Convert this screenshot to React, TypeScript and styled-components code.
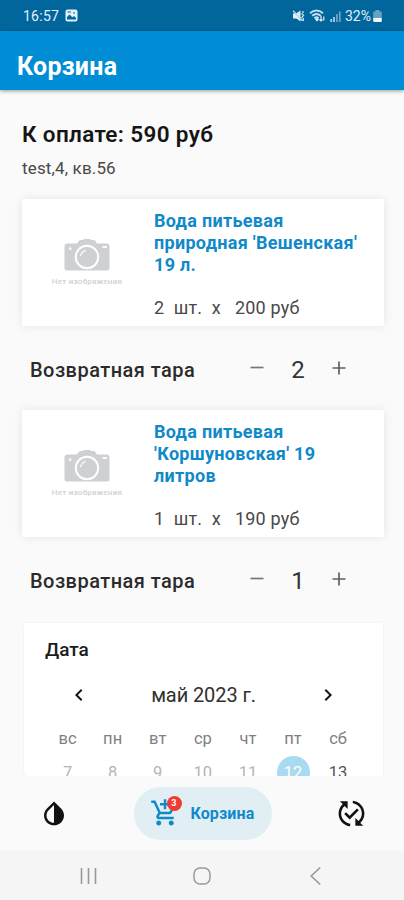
import React from 'react';
import styled, { createGlobalStyle } from 'styled-components';
import {
  MdInvertColors,
  MdAddShoppingCart,
  MdPublishedWithChanges,
  MdChevronLeft,
  MdChevronRight,
} from 'react-icons/md';

const GlobalStyle = createGlobalStyle`
  * { box-sizing: border-box; }
  body {
    margin: 0;
    background: #fafafa;
    font-family: Roboto, "Noto Sans", sans-serif;
    color: #1c1c1c;
  }
`;

const Screen = styled.div`
  display: flex;
  flex-direction: column;
  width: 404px;
  height: 900px;
  overflow: hidden;
  background: #fafafa;
`;

const StatusBar = styled.div`
  flex: none;
  display: flex;
  align-items: center;
  justify-content: space-between;
  height: 31px;
  padding: 0 22px 0 23px;
  background: #01669c;
  color: #e3f0f7;
  font-size: 14px;
`;

const StatusGroup = styled.div<{ $gap: number }>`
  display: flex;
  align-items: center;
  gap: ${(p) => p.$gap}px;
  line-height: 20px;
`;

const Clock = styled.span`
  letter-spacing: 0.25px;
`;

const AppBar = styled.header`
  flex: none;
  display: flex;
  align-items: center;
  height: 59px;
  padding: 12px 17px 0;
  background: #018dd5;
  color: #fff;
  box-shadow: 0 1px 4px rgba(0, 0, 0, 0.4);
  z-index: 1;
`;

const AppTitle = styled.h1`
  margin: 0;
  font-size: 25px;
  line-height: 30px;
  font-weight: 700;
  letter-spacing: 0.25px;
`;

const Content = styled.main`
  flex: none;
  height: 686px;
  padding: 29px 20px 0 22px;
  overflow: hidden;
`;

const Total = styled.h2`
  margin: 0;
  font-size: 22.5px;
  line-height: 30px;
  font-weight: 600;
  letter-spacing: 0.35px;
  color: #151515;
`;

const Address = styled.p`
  margin: 5px 0 0;
  font-size: 17px;
  line-height: 28px;
  letter-spacing: 0.15px;
  color: #484848;
`;

const Items = styled.section`
  display: flex;
  flex-direction: column;
  margin-top: 17px;
`;

const Card = styled.article`
  display: flex;
  height: 127px;
  background: #fff;
  border-radius: 2px;
  box-shadow: 0 0 10px rgba(0, 0, 0, 0.09);
`;

const Thumb = styled.div`
  width: 132px;
  padding: 40px 2px 0 0;
  display: flex;
  flex-direction: column;
  align-items: center;
  color: #ced0d3;
`;

const ThumbCaption = styled.span`
  margin-top: 6px;
  font-size: 8px;
  line-height: 10px;
  font-weight: 500;
  letter-spacing: 0.25px;
  white-space: nowrap;
`;

const Info = styled.div`
  flex: 1;
  display: flex;
  flex-direction: column;
  justify-content: space-between;
  padding: 11px 0 6px;
`;

const ProductName = styled.h3`
  margin: 0;
  font-size: 18px;
  line-height: 22px;
  font-weight: 700;
  letter-spacing: 0.3px;
  color: #1089c9;
  white-space: pre-line;
`;

const Quantity = styled.div`
  font-size: 18px;
  line-height: 24px;
  letter-spacing: 0.22px;
  color: #484848;
  white-space: pre;
`;

const ReturnRow = styled.div`
  display: flex;
  align-items: center;
  height: 84px;
  padding: 4px 0 0 8px;
`;

const ReturnLabel = styled.span`
  width: 214px;
  font-size: 20px;
  font-weight: 500;
  letter-spacing: 0.47px;
  color: #2b2b2b;
`;

const Stepper = styled.div`
  display: flex;
  align-items: center;
  gap: 20px;
`;

const StepButton = styled.button`
  display: flex;
  justify-content: center;
  width: 26px;
  padding: 0 0 4px;
  border: 0;
  background: none;
`;

const StepValue = styled.span`
  width: 16px;
  text-align: center;
  font-size: 24px;
  line-height: 28px;
  color: #333;
`;

const Calendar = styled.section`
  height: 153px;
  margin: 2px 1px 0 2px;
  padding: 0 22px 0 21px;
  overflow: hidden;
  border-radius: 2px 2px 0 4px;
  background: #fff;
  box-shadow: 0 0 2px rgba(0, 0, 0, 0.08);
`;

const CalendarTitle = styled.h3`
  margin: 0;
  padding-top: 14px;
  font-size: 19px;
  line-height: 26px;
  font-weight: 500;
`;

const MonthRow = styled.div`
  display: flex;
  align-items: center;
  justify-content: space-between;
  height: 30px;
  margin-top: 17px;
  padding: 0 21px 0 22px;
  font-size: 20px;
  letter-spacing: -0.1px;
  color: #303030;

  svg { color: #151515; }
`;

const Week = styled.div<{ $top: number }>`
  display: grid;
  grid-template-columns: repeat(7, 45.1px);
  justify-items: center;
  align-items: center;
  height: 33px;
  margin-top: ${(p) => p.$top}px;
  font-size: 16.5px;
  color: #808080;
`;

const Day = styled.span<{ $kind?: 'past' | 'selected' | 'open' }>`
  display: flex;
  align-items: center;
  justify-content: center;
  width: 33px;
  height: 33px;
  border-radius: 50%;
  background: ${(p) => (p.$kind === 'selected' ? '#a8daf1' : 'transparent')};
  color: ${(p) =>
    p.$kind === 'selected' ? '#fff' : p.$kind === 'open' ? '#555' : '#b5b5b5'};
`;

const BottomNav = styled.nav`
  flex: none;
  display: flex;
  align-items: center;
  justify-content: space-between;
  height: 75px;
  padding: 0 37px 0 39px;
  color: #111;
`;

const ActiveTab = styled.div`
  display: flex;
  align-items: center;
  justify-content: space-between;
  width: 138px;
  height: 53px;
  padding: 0 17px 0 16px;
  border-radius: 27px;
  background: #e1eff5;
  color: #1089c9;
  font-size: 16px;
  font-weight: 700;
  letter-spacing: 0.15px;
`;

const CartIcon = styled.span`
  position: relative;
  display: flex;
  margin-top: -1px;
`;

const Badge = styled.span`
  position: absolute;
  top: -2px;
  right: -2px;
  width: 15px;
  height: 15px;
  border-radius: 50%;
  background: #f03b31;
  color: #fff;
  font-size: 9px;
  line-height: 15px;
  text-align: center;
`;

const SystemNav = styled.div`
  flex: none;
  display: grid;
  grid-template-columns: 178px 48px 178px;
  justify-items: center;
  align-items: center;
  height: 49px;
  background: #f5f5f5;
`;

const PictureGlyph = () => (
  <svg width="13" height="13" viewBox="0 0 13 13">
    <rect x="0.5" y="0.5" width="12" height="12" rx="2" fill="#e3f0f7" />
    <path d="M2 10.500V8l2.500-2.500 2.800 2.800L9 7l2 2v1.500z" fill="#01669c" />
    <path d="M2.500 3h3.500M8 4h2" stroke="#01669c" strokeWidth="1.200" />
  </svg>
);

const MuteGlyph = () => (
  <svg width="13" height="12" viewBox="0 0 13 12">
    <path d="M1 3.500h3l4.500-3v11L4.500 8.500H1z" fill="#e3f0f7" />
    <path d="M9.5 3.200l2 2.200-2 2.600M11 1v2M11.300 8v3M1 .8l9.500 10" stroke="#b9d8e8" strokeWidth="1.400" fill="none" />
  </svg>
);

const WifiGlyph = () => (
  <svg width="17" height="13" viewBox="0 0 17 13">
    <path d="M1 4.2Q7.5-1 14 4.200M3.200 6.800q4.300-3.600 8.600 0M5.400 9.200q2.100-1.800 4.200 0" stroke="#c5dfec" strokeWidth="1.900" fill="none" />
    <path d="M8 8.500l2 2-2 2-2-2z" fill="#e3f0f7" />
    <path d="M12 7v5M10.500 10.500l1.500 1.500 1.500-1.500M14.800 7.500v4" stroke="#e3f0f7" strokeWidth="1.200" fill="none" />
  </svg>
);

const SignalGlyph = () => (
  <svg width="11" height="12" viewBox="0 0 11 12">
    <path d="M1.2 9V12M4 7V12" stroke="#b5d4e4" strokeWidth="1.700" />
    <path d="M6.900 4V12M9.800 1.500V12" stroke="#6fa7c4" strokeWidth="1.700" />
  </svg>
);

const BatteryGlyph = () => (
  <svg width="9" height="12" viewBox="0 0 9 12">
    <path d="M2.5 0h4v1.500H8q.8 0 .8.8V8H.2V2.300q0-.8.8-.8h1.500z" fill="#66a3c2" />
    <path d="M.2 8h8.600v3q0 1-1 1H1.200q-1 0-1-1z" fill="#eef7fb" />
  </svg>
);

const Camera = () => (
  <svg width="46" height="32" viewBox="0 0 46 32">
    <path
      d="M3.500 4.500H12q1.500 0 2-1.500T16.500 1H19l1-1h6l1 1h2.500q2 .2 2.500 2t2 1.500h8.500q3 0 3 3V29q0 2.500-2.500 2.500H3Q.5 31.500.5 29V7.500q0-3 3-3z"
      fill="currentColor"
    />
    <circle cx="23" cy="18" r="11.200" fill="none" stroke="#fff" strokeWidth="2" />
    <path d="M16.500 17q1-4.500 5.500-5.500" fill="none" stroke="#fff" strokeWidth="1.200" />
    <path d="M4.500 10.500l1.700-3 1.700 3z" fill="#fff" />
    <path d="M38.500 8h4.500" stroke="#fff" strokeWidth="1.800" />
  </svg>
);

const Minus = () => (
  <svg width="14" height="14" viewBox="0 0 14 14">
    <path d="M.5 6.500h13" stroke="#777" strokeWidth="1.700" />
  </svg>
);

const Plus = () => (
  <svg width="14" height="14" viewBox="0 0 14 14">
    <path d="M.5 7h13M7 .5v13" stroke="#606060" strokeWidth="1.700" />
  </svg>
);

interface Product {
  name: string;
  count: number;
  price: number;
  caption: string;
}

const products: Product[] = [
  { name: "Вода питьевая\nприродная 'Вешенская'\n19 л.", count: 2, price: 200, caption: 'Нет изображения' },
  { name: "Вода питьевая\n'Коршуновская' 19\nлитров", count: 1, price: 190, caption: 'Нет изображения' },
];

const weekdays = ['вс', 'пн', 'вт', 'ср', 'чт', 'пт', 'сб'];
const days = [7, 8, 9, 10, 11, 12, 13];

export default function App() {
  return (
    <Screen>
      <GlobalStyle />
      <StatusBar>
        <StatusGroup $gap={6}>
          <Clock>16:57</Clock>
          <PictureGlyph />
        </StatusGroup>
        <StatusGroup $gap={4}>
          <MuteGlyph />
          <WifiGlyph />
          <SignalGlyph />
          <StatusGroup $gap={2}>
            <span>32%</span>
            <BatteryGlyph />
          </StatusGroup>
        </StatusGroup>
      </StatusBar>
      <AppBar>
        <AppTitle>Корзина</AppTitle>
      </AppBar>
      <Content>
        <Total>К оплате: 590 руб</Total>
        <Address>test,4, кв.56</Address>
        <Items>
          {products.map((p) => (
            <React.Fragment key={p.name}>
              <Card>
                <Thumb>
                  <Camera />
                  <ThumbCaption>{p.caption}</ThumbCaption>
                </Thumb>
                <Info>
                  <ProductName>{p.name}</ProductName>
                  <Quantity>{`${p.count}  шт.  х   ${p.price} руб`}</Quantity>
                </Info>
              </Card>
              <ReturnRow>
                <ReturnLabel>Возвратная тара</ReturnLabel>
                <Stepper>
                  <StepButton aria-label="Меньше"><Minus /></StepButton>
                  <StepValue>{p.count}</StepValue>
                  <StepButton aria-label="Больше"><Plus /></StepButton>
                </Stepper>
              </ReturnRow>
            </React.Fragment>
          ))}
        </Items>
        <Calendar>
          <CalendarTitle>Дата</CalendarTitle>
          <MonthRow>
            <MdChevronLeft size={24} />
            <span>май 2023 г.</span>
            <MdChevronRight size={24} />
          </MonthRow>
          <Week $top={12}>
            {weekdays.map((w) => <span key={w}>{w}</span>)}
          </Week>
          <Week $top={1}>
            {days.map((d) => (
              <Day key={d} $kind={d < 12 ? 'past' : d === 12 ? 'selected' : 'open'}>{d}</Day>
            ))}
          </Week>
        </Calendar>
      </Content>
      <BottomNav>
        <MdInvertColors size={30} />
        <ActiveTab>
          <CartIcon>
            <MdAddShoppingCart size={30} />
            <Badge>3</Badge>
          </CartIcon>
          <span>Корзина</span>
        </ActiveTab>
        <MdPublishedWithChanges size={31} />
      </BottomNav>
      <SystemNav>
        <svg width="18" height="18" viewBox="0 0 18 18">
          <path d="M1.500 1v16M8.500 1v16M15.500 1v16" stroke="#999" strokeWidth="1.600" />
        </svg>
        <svg width="18" height="18" viewBox="0 0 18 18">
          <rect x="1" y="1" width="16" height="16" rx="6" fill="none" stroke="#999" strokeWidth="1.500" />
        </svg>
        <svg width="12" height="20" viewBox="0 0 12 20">
          <path d="M11.200 1.500L2.200 10l9 8.500" fill="none" stroke="#999" strokeWidth="1.600" />
        </svg>
      </SystemNav>
    </Screen>
  );
}
